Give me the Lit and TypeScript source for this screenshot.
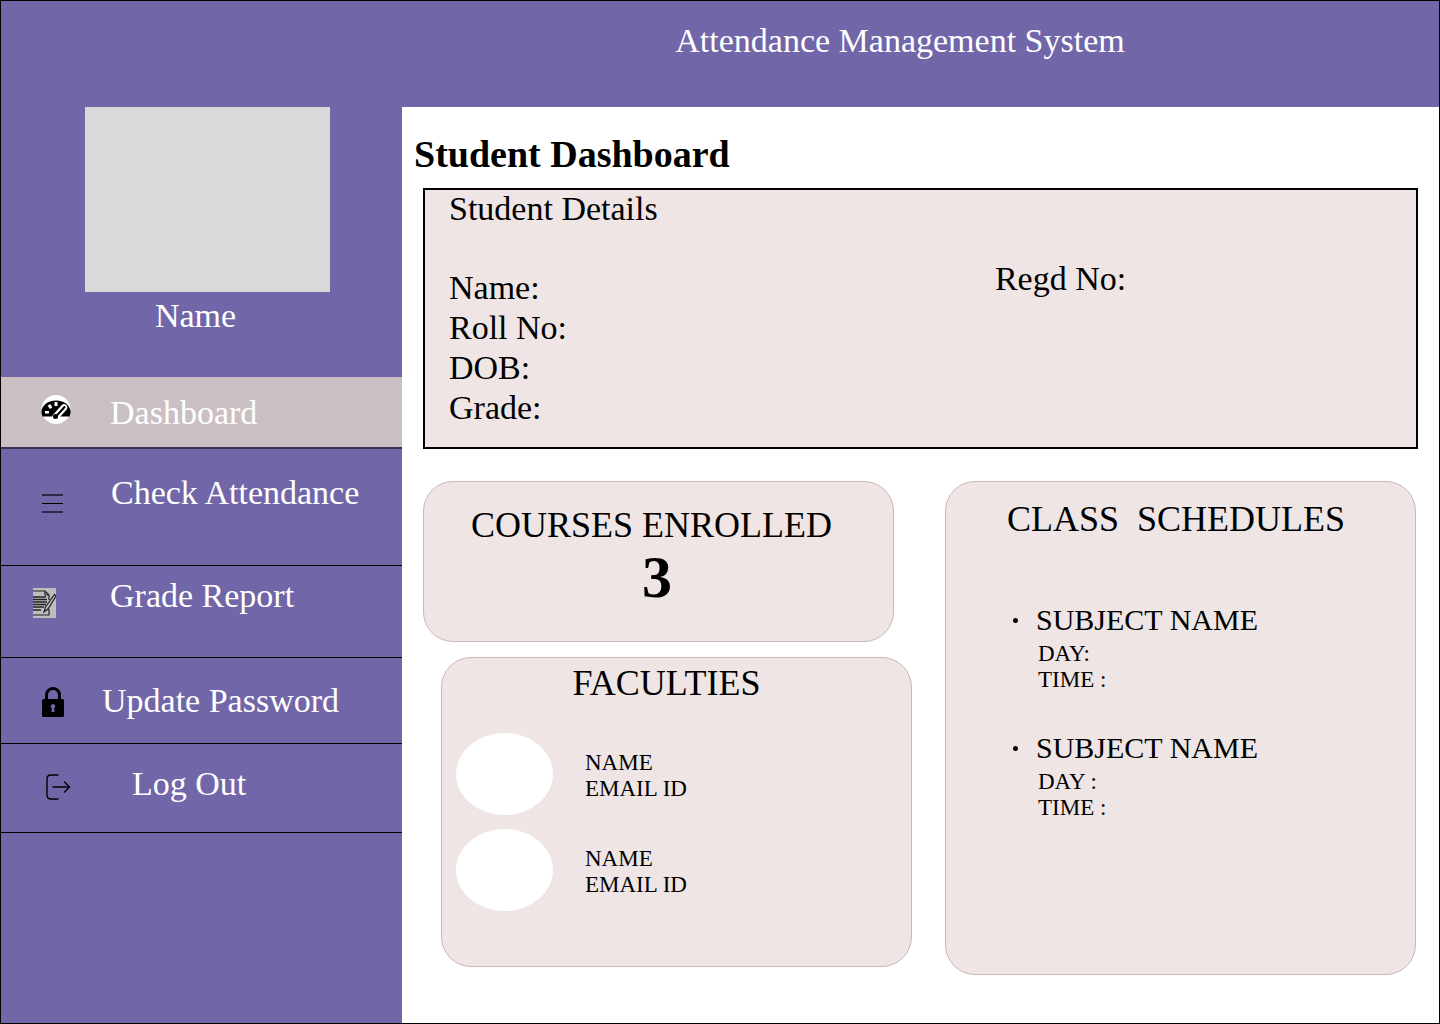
import { LitElement, html, css, svg } from "lit";
import { customElement } from "lit/decorators.js";

const icons = {
  gauge: svg`<svg class="icon" width="30" height="30" viewBox="0 0 30 30" aria-hidden="true">
    <circle cx="15" cy="14.500" r="14.500" fill="#fff"/>
    <path d="M1.500 21.500Q0 18 .5 15.500C2 9 8 5.500 15 5.500S28 9 29.500 15.500Q30 18 28.500 21.500Z" fill="#000"/>
    <g fill="#fff"><rect x="13.500" y="7" width="3" height="4"/>
    <rect x="7.500" y="9.500" width="3" height="4" transform="rotate(-35 9 11.500)"/>
    <rect x="4" y="16" width="4" height="2.500"/></g>
    <path d="M14.500 22L23 12.500" stroke="#fff" stroke-width="6.500" stroke-linecap="round"/>
    <path d="M15 21.500L23.500 12" stroke="#000" stroke-width="2" stroke-linecap="round"/>
    <circle cx="14.500" cy="21.500" r="2.500" fill="#000"/>
  </svg>`,
  menu: svg`<svg class="icon" width="22" height="22" viewBox="0 0 22 22" aria-hidden="true">
    <path d="M0 2H21M0 19H21" stroke="#2d2844" stroke-width="2" fill="none"/>
    <path d="M0 10.500H21" stroke="#000" stroke-width="1"/>
  </svg>`,
  report: svg`<svg class="icon" width="23" height="30" viewBox="0 0 23 30" aria-hidden="true">
    <rect width="23" height="30" fill="#bdbdbd"/>
    <g fill="none" stroke="#222" stroke-width="1.200">
    <path d="M0 3H12L16 7V12M16 21V27H0M12 3V7H16"/>
    <path d="M0 9H13M0 11.500H14M0 14H14M0 16.500H13M0 19H11M0 22H8" stroke-width="1.500"/>
    <path d="M11 24L12.500 19L21.500 6.500L23 8L15 21Z" fill="#bdbdbd"/></g>
  </svg>`,
  lock: svg`<svg class="icon" width="22" height="30" viewBox="0 0 22 30" aria-hidden="true">
    <path d="M4.500 13V8a6.500 6.500 0 0 1 13 0V13" fill="none" stroke="#000" stroke-width="3"/>
    <rect x="0" y="12" width="22" height="18" rx="1.500" fill="#000"/>
    <path d="M11 17a2.200 2.200 0 0 1 1.300 4L12.500 25H9.500L9.700 21A2.200 2.200 0 0 1 11 17Z" fill="#7166a8"/>
  </svg>`,
  logout: svg`<svg class="icon" width="25" height="26" viewBox="0 0 25 26" aria-hidden="true">
    <path d="M12.500 1H5Q1 1 1 5V21Q1 25 5 25H12.500M6.500 13H24M18 7.500L23.500 13L18 18.500" fill="none" stroke="#000" stroke-width="1.400"/>
  </svg>`,
};

const links = [
  { id: "dashboard", label: "Dashboard", icon: icons.gauge },
  { id: "attendance", label: "Check Attendance", icon: icons.menu },
  { id: "report", label: "Grade Report", icon: icons.report },
  { id: "password", label: "Update Password", icon: icons.lock },
  { id: "logout", label: "Log Out", icon: icons.logout },
];

const faculties = [
  { name: "NAME", email: "EMAIL ID" },
  { name: "NAME", email: "EMAIL ID" },
];

const subjects = [
  { name: "SUBJECT NAME", day: "DAY:", time: "TIME :" },
  { name: "SUBJECT NAME", day: "DAY :", time: "TIME :" },
];

@customElement("app-root")
export class AppRoot extends LitElement {
  static styles = css`
    :host {
      display: flex;
      flex-direction: column;
      box-sizing: border-box;
      min-height: 100vh;
      border: 1px solid #000;
      background: #fff;
      color: #000;
      font-family: "Liberation Serif", "Times New Roman", serif;
      font-size: 34px;
      line-height: 40px;
    }
    * { box-sizing: border-box; }
    h1, h2, h3, p, ul { margin: 0; padding: 0; font: inherit; }
    ul { list-style: none; }
    header {
      background: #7166a8;
      color: #fff;
      padding: 20px 0 46px 360px;
      text-align: center;
    }
    .body { flex: 1; display: grid; grid-template-columns: 401px 1fr; }
    .sidebar { background: #7166a8; color: #fff; }
    .photo { width: 245px; height: 185px; margin-left: 84px; background: #d9d9d9; }
    .person { margin: 4px 12px 41px 0; text-align: center; }
    .link {
      display: flex;
      align-items: flex-start;
      color: inherit;
      text-decoration: none;
      border-bottom: 1px solid #000;
      white-space: nowrap;
    }
    .icon { display: block; flex: none; }
    .dashboard { height: 72px; padding: 16px 0 0 40px; gap: 39px; background: #cabfc3; border-bottom: 2px solid #393350; }
    .attendance { height: 117px; padding: 24px 0 0 41px; gap: 47px; }
    .report { height: 92px; padding: 10px 0 0 32px; gap: 54px; }
    .password { height: 86px; padding: 23px 0 0 41px; gap: 38px; }
    .logout { height: 89px; padding: 20px 0 0 45px; gap: 61px; }
    .dashboard .icon { margin-top: 2px; }
    .attendance .icon { margin-top: 20px; }
    .report .icon { margin-top: 12px; }
    .password .icon { margin-top: 6px; }
    .logout .icon { margin-top: 10px; }
    main { padding: 27px 21px 40px 12px; }
    .title { font-size: 38px; font-weight: 700; }
    .details {
      margin: 14px 0 32px 9px;
      padding: 0 24px 19px;
      border: 2px solid #000;
      background: #eee5e4;
      display: grid;
      grid-template-columns: 11fr 8fr;
    }
    .details h2 { grid-column: 1 / -1; line-height: 38px; margin-bottom: 31px; }
    .details ul { padding-top: 9px; }
    .cards { display: grid; grid-template-columns: 489fr 471fr; gap: 33px; margin: 0 2px 0 9px; }
    .card { background: #eee5e4; border: 1px solid #cbb6b8; border-radius: 30px; }
    .card h2 { font-size: 36px; }
    .stack { display: flex; flex-direction: column; gap: 15px; }
    .courses { margin-right: 18px; min-height: 161px; padding: 23px 14px 0 0; text-align: center; }
    .count { font-size: 60px; line-height: 64px; font-weight: 700; padding-left: 11px; }
    .faculties { margin-left: 18px; min-height: 310px; padding: 5px 14px 0; }
    .faculties h2 { text-align: center; padding-right: 20px; margin-bottom: 30px; }
    .faculty { display: flex; align-items: center; gap: 32px; height: 82px; margin-bottom: 14px; }
    .faculty .small { padding-top: 4px; }
    .avatar { width: 97px; height: 82px; border-radius: 50%; background: #fff; }
    .small { font-size: 23px; line-height: 26px; }
    .schedules { min-height: 494px; padding: 17px 16px 0 61px; }
    .schedules h2 { white-space: pre; margin-bottom: 63px; }
    .subject { margin-bottom: 37px; padding-left: 31px; }
    .subject h3 {
      font-size: 30px;
      line-height: 36px;
      margin: 0 0 3px -25px;
      display: flex;
      align-items: center;
      gap: 18px;
    }
    .dot { width: 5px; height: 5px; border-radius: 50%; background: #000; }
  `;

  render() {
    return html`
      <header><h1>Attendance Management System</h1></header>
      <div class="body">
        <aside class="sidebar">
          <div class="photo"></div>
          <p class="person">Name</p>
          <nav>
            ${links.map((l) => html`<a class="link ${l.id}" href="#${l.id}">${l.icon}<span>${l.label}</span></a>`)}
          </nav>
        </aside>
        <main>
          <h2 class="title">Student Dashboard</h2>
          <section class="details">
            <h2>Student Details</h2>
            <ul>
              <li>Name:</li>
              <li>Roll No:</li>
              <li>DOB:</li>
              <li>Grade:</li>
            </ul>
            <p>Regd No:</p>
          </section>
          <div class="cards">
            <div class="stack">
              <section class="card courses">
                <h2>COURSES ENROLLED</h2>
                <p class="count">3</p>
              </section>
              <section class="card faculties">
                <h2>FACULTIES</h2>
                <ul>
                  ${faculties.map((f) => html`<li class="faculty">
                    <span class="avatar"></span>
                    <div class="small"><p>${f.name}</p><p>${f.email}</p></div>
                  </li>`)}
                </ul>
              </section>
            </div>
            <section class="card schedules">
              <h2>CLASS  SCHEDULES</h2>
              <ul>
                ${subjects.map((s) => html`<li class="subject">
                  <h3><span class="dot"></span>${s.name}</h3>
                  <p class="small">${s.day}</p>
                  <p class="small">${s.time}</p>
                </li>`)}
              </ul>
            </section>
          </div>
        </main>
      </div>
    `;
  }
}
